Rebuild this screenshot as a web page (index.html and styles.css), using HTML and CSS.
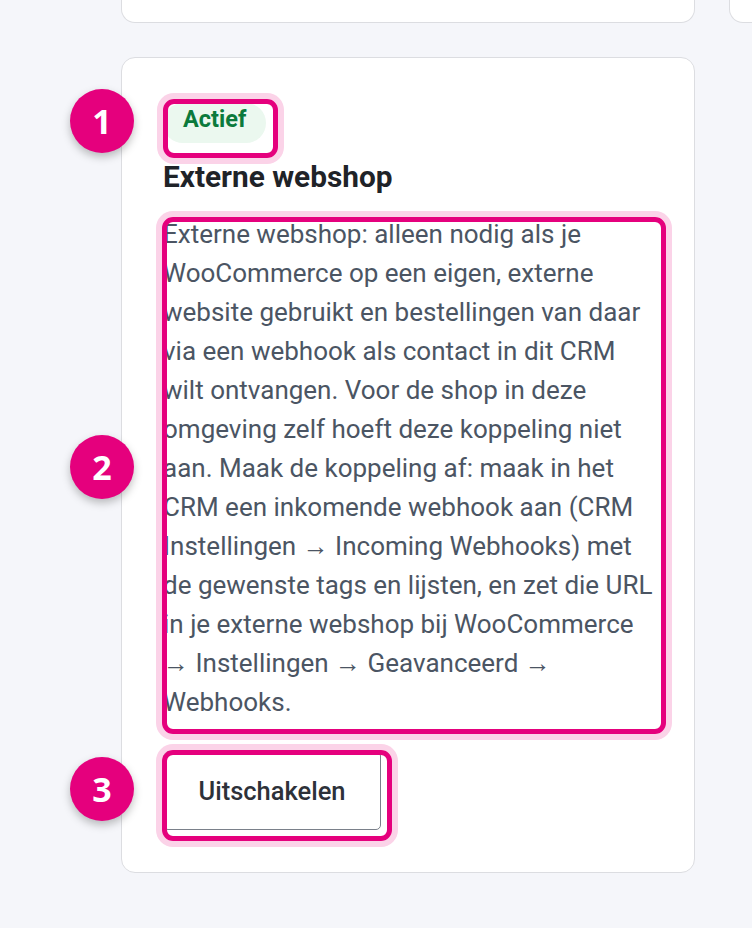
FILE: index.html
```html
<!DOCTYPE html>
<html lang="nl">
<head>
<meta charset="utf-8">
<title>Externe webshop</title>
<link rel="stylesheet" href="styles.css">
</head>
<body>
<div class="page">
  <div class="top-row">
    <div class="top-card"></div>
    <div class="top-card"></div>
  </div>
  <div class="card">
    <span class="badge">Actief</span>
    <h2 class="title">Externe webshop</h2>
    <p class="desc">Externe webshop: alleen nodig als je WooCommerce op een eigen, externe website gebruikt en bestellingen van daar via een webhook als contact in dit CRM wilt ontvangen. Voor de shop in deze omgeving zelf hoeft deze koppeling niet aan. Maak de koppeling af: maak in het CRM een inkomende webhook aan (CRM Instellingen → Incoming Webhooks) met de gewenste tags en lijsten, en zet die URL in je externe webshop bij WooCommerce → Instellingen → Geavanceerd → Webhooks.</p>
    <button class="btn" type="button">Uitschakelen</button>

    <div class="hl hl-1"></div>
    <div class="hl hl-2"></div>
    <div class="hl hl-3"></div>
    <div class="num num-1">1</div>
    <div class="num num-2">2</div>
    <div class="num num-3">3</div>
  </div>
</div>
</body>
</html>
```
FILE: styles.css
```css
html, body {
  margin: 0;
  padding: 0;
  background: #f5f6fa;
  overflow: hidden;
}
.page {
  width: 752px;
  height: 928px;
  padding-left: 121px;
  box-sizing: border-box;
  overflow: hidden;
  font-family: Roboto, "Liberation Sans", sans-serif;
}
.top-row {
  display: flex;
  gap: 34px;
  width: 1200px;
}
.top-card {
  flex: 0 0 574px;
  height: 23px;
  box-sizing: border-box;
  background: #fff;
  border: 1.5px solid #dcdde1;
  border-top: 0;
  border-radius: 0 0 14px 14px;
}
.card {
  position: relative;
  margin-top: 34px;
  width: 574px;
  box-sizing: border-box;
  background: #fff;
  border: 1.5px solid #dcdde1;
  border-radius: 14px;
  padding: 45px 41px 42px;
}
.badge {
  display: inline-block;
  height: 40px;
  line-height: 32px;
  padding: 0 20px;
  border-radius: 20px;
  background: #ebf8ef;
  color: #0b7a3c;
  font-weight: 700;
  font-size: 23.5px;
}
.title {
  margin: 16px 0 0;
  font-size: 29.8px;
  line-height: 36px;
  font-weight: 700;
  color: #1f2328;
}
.desc {
  margin: 20px 0 0;
  font-size: 26px;
  line-height: 39px;
  color: #4b5563;
}
.btn {
  display: block;
  margin-top: 29px;
  width: 218px;
  height: 79px;
  box-sizing: border-box;
  background: #fff;
  border: 1.5px solid #7a808a;
  border-radius: 5px;
  font-family: Roboto, "Liberation Sans", sans-serif;
  font-weight: 500;
  font-size: 25.5px;
  color: #2d3139;
  padding: 0;
}
.hl {
  position: absolute;
  box-sizing: border-box;
  border: 5px solid #e5007d;
  border-radius: 11px;
  box-shadow: 0 0 0 6px #fbd3e8;
  pointer-events: none;
}
.hl-1 { left: 41px; top: 41px; width: 115px; height: 59px; }
.hl-2 { left: 40px; top: 159px; width: 504px; height: 517px; }
.hl-3 { left: 40px; top: 692px; width: 230px; height: 91px; }
.num {
  position: absolute;
  left: -52px;
  width: 64px;
  height: 64px;
  border-radius: 50%;
  background: #e5007d;
  color: #fff;
  font-family: "Open Sans", Roboto, sans-serif;
  font-weight: 700;
  font-size: 34px;
  line-height: 64px;
  text-align: center;
  box-shadow: 0 4px 8px rgba(0, 0, 0, 0.25);
}
.num-1 { top: 31px; }
.num-2 { top: 377px; }
.num-3 { top: 699px; }
```
